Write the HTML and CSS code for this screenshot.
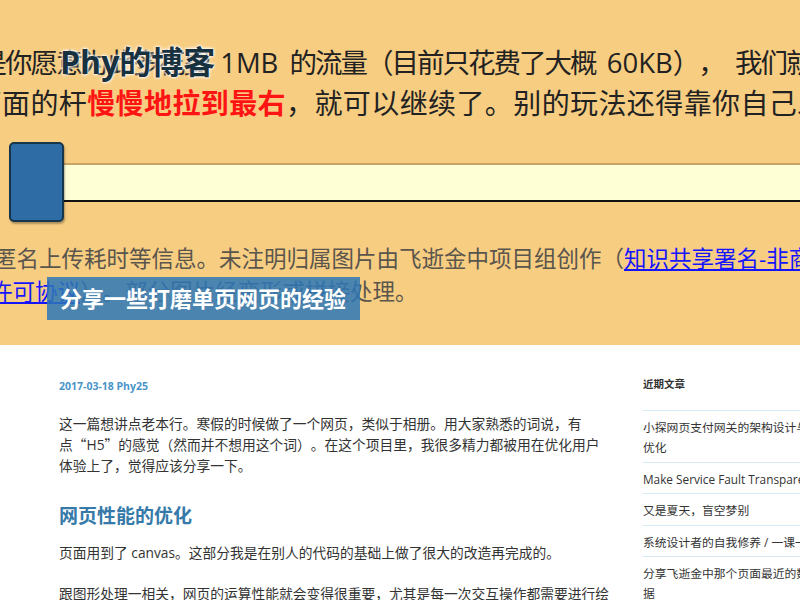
FILE: index.html
```html
<!DOCTYPE html>
<html lang="zh-CN">
<head>
<meta charset="utf-8">
<title>分享一些打磨单页网页的经验 – Phy的博客</title>
<link rel="stylesheet" href="styles.css">
</head>
<body>
<header class="hero">
  <div class="shot">
    <p class="big l1">是你愿意为此多花费 <span class="lat">1MB</span> 的流量（目前只花费了大概 <span class="lat">60KB</span>）， 我们就开始吧</p>
    <p class="big l2">下面的杆<strong class="red">慢慢地拉到最右</strong>，就可以继续了。别的玩法还得靠你自己发现</p>
    <div class="slider">
      <div class="handle"></div>
      <div class="track"></div>
    </div>
    <p class="small l3">匿名上传耗时等信息。未注明归属图片由飞逝金中项目组创作（<a href="#">知识共享署名-非商业性使用</a></p>
    <p class="small l4"><a href="#">许可协议</a>）。部分图片经变形或拼接处理。</p>
  </div>
  <a class="site-title" href="#">Phy的博客</a>
  <h1 class="post-title">分享一些打磨单页网页的经验</h1>
</header>

<div class="content">
  <main class="post">
    <div class="meta">2017-03-18 Phy25</div>
    <p>这一篇想讲点老本行。寒假的时候做了一个网页，类似于相册。用大家熟悉的词说，有<span class="nb">点<span class="q">“</span>H5<span class="q">”</span></span>的感觉（然而并不想用这个词）。在这个项目里，我很多精力都被用在优化用户体验上了，觉得应该分享一下。</p>
    <h2>网页性能的优化</h2>
    <p>页面用到了 canvas。这部分我是在别人的代码的基础上做了很大的改造再完成的。</p>
    <p>跟图形处理一相关，网页的运算性能就会变得很重要，尤其是每一次交互操作都需要进行绘制的时候。</p>
  </main>
  <aside class="sidebar">
    <h3>近期文章</h3>
    <ul>
      <li><a href="#">小探网页支付网关的架构设计与优化</a></li>
      <li><a href="#">Make Service Fault Transparent</a></li>
      <li><a href="#">又是夏天，盲空梦别</a></li>
      <li><a href="#">系统设计者的自我修养 / 一课一得</a></li>
      <li><a href="#">分享飞逝金中那个页面最近的数据</a></li>
    </ul>
  </aside>
</div>
</body>
</html>
```
FILE: styles.css
```css
html {
  overflow: hidden;
}
body {
  margin: 0;
  font-family: "Open Sans", "Noto Sans CJK SC", sans-serif;
  color: #333;
  background: #fff;
  text-spacing-trim: space-all;
}
.hero {
  position: relative;
  height: 345px;
  background: #f7cd82;
  overflow: hidden;
}
.shot {
  padding-top: 43px;
}
.big {
  margin: 0;
  font-size: 27.5px;
  line-height: 40px;
  color: #222;
  white-space: nowrap;
}
.l1 {
  text-indent: -20.5px;
  letter-spacing: -2px;
  word-spacing: 6px;
}
.lat {
  letter-spacing: 0;
}
.l2 {
  font-size: 28px;
  letter-spacing: 0.4px;
  text-indent: -26.4px;
}
.red {
  color: #ff1414;
  font-weight: bold;
}
.slider {
  display: flex;
  align-items: center;
  height: 80px;
  margin-top: 19px;
  padding-left: 9px;
}
.handle {
  position: relative;
  z-index: 1;
  flex: none;
  width: 51px;
  height: 76px;
  background: #2d6ca5;
  border: 2px solid #17364c;
  border-radius: 5px;
  box-shadow: 1px 2px 2px rgba(0, 0, 0, 0.3);
}
.track {
  flex: 1;
  height: 35px;
  background: #ffffd6;
  border-top: 2px solid #c9a565;
  border-bottom: 2px solid #111;
}
.small {
  margin: 0;
  font-size: 22.5px;
  line-height: 33px;
  color: #5a554d;
  white-space: nowrap;
}
.small a {
  color: #1414ff;
}
.l3 {
  margin-top: 19.5px;
  text-indent: -6px;
}
.l4 {
  text-indent: -10px;
}
.site-title {
  position: absolute;
  left: 60px;
  top: 44px;
  font-size: 32px;
  line-height: 36px;
  font-weight: bold;
  color: #18313f;
  text-decoration: none;
  text-shadow: 0 0 2px #fff, 0 0 3px #fff, 0 0 4px rgba(255, 255, 255, 0.8);
}
.post-title {
  position: absolute;
  left: 47px;
  top: 277px;
  margin: 0;
  height: 43px;
  padding: 0 14px 0 13px;
  font-size: 22px;
  line-height: 43px;
  font-weight: bold;
  color: #fff;
  background: rgba(45, 119, 182, 0.85);
}
.content {
  display: flex;
  gap: 33px;
  padding: 33px 0 0 59px;
}
.post {
  flex: none;
  width: 551px;
}
.meta {
  font-size: 10.5px;
  line-height: 16px;
  font-weight: bold;
  color: #4a95c8;
}
.post p {
  margin: 0 0 20.5px;
  font-size: 13.75px;
  line-height: 21px;
}
.meta + p {
  margin-top: 18.5px;
}
.nb {
  white-space: nowrap;
}
.q {
  font-family: "Noto Sans CJK SC", sans-serif;
}
.post h2 {
  margin: 0 0 5.5px;
  font-size: 19px;
  line-height: 40px;
  font-weight: bold;
  color: #357aa8;
}
.sidebar {
  flex: none;
  width: 176px;
  margin-top: -2px;
}
.sidebar h3 {
  margin: 0 0 18px;
  font-size: 10.5px;
  line-height: 16px;
  font-weight: bold;
  color: #333;
}
.sidebar ul {
  list-style: none;
  margin: 0;
  padding: 0;
}
.sidebar li {
  border-top: 1px solid #d6eaf6;
  padding: 6px 0 4.5px;
  font-size: 11.8px;
  line-height: 20px;
}
.sidebar a {
  color: #333;
  text-decoration: none;
}
```
